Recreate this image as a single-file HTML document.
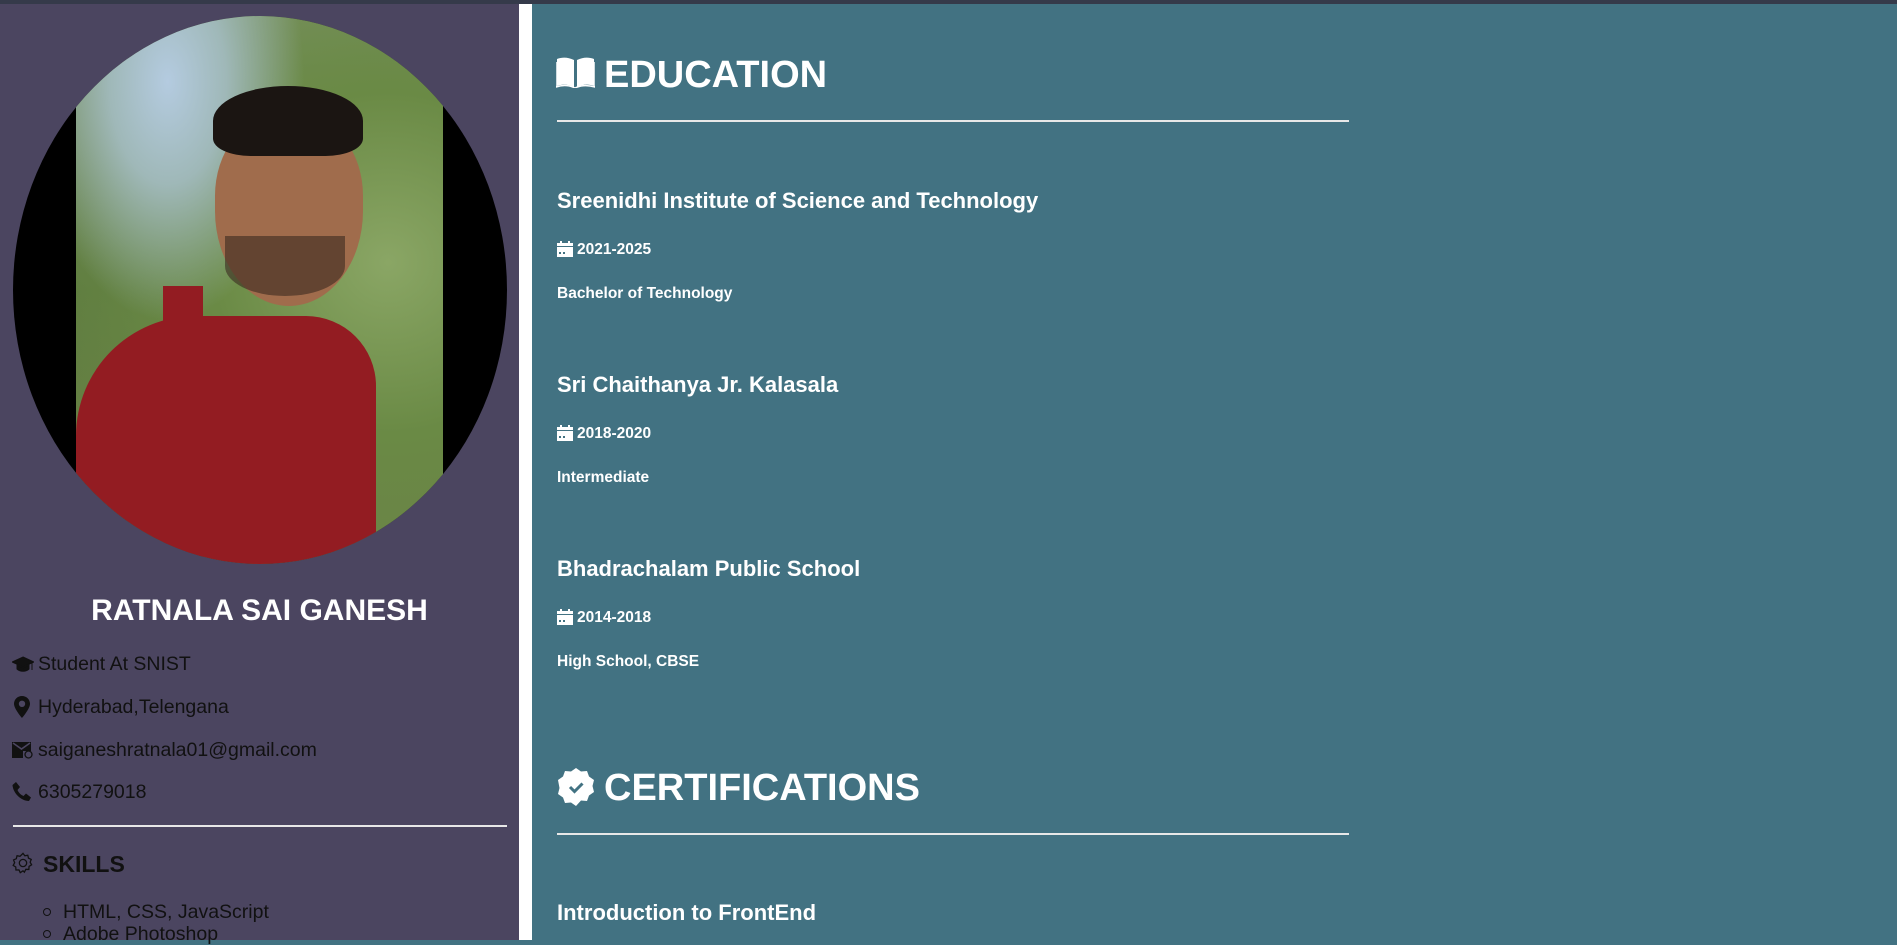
<!DOCTYPE html>
<html><head><meta charset="utf-8"><style>
*{margin:0;padding:0;box-sizing:border-box}
body{width:1897px;height:937px;overflow:hidden;background:#427282;font-family:"Liberation Sans",Arial,sans-serif;position:relative}
.a{position:absolute;white-space:nowrap}
.side{position:absolute;left:0;top:0;width:519px;height:940px;background:#4b4560}
.strip{position:absolute;left:519px;top:0;width:13px;height:940px;background:#fff}
.topbar{position:absolute;left:0;top:0;width:1897px;height:4px;background:#353a4a}
.w{color:#fff;font-weight:bold}
.c{font-size:19.5px;color:#111;line-height:20px}
.hr{position:absolute;height:2px;background:#e8e8e8}
</style></head><body>
<div class="side"></div>
<div class="strip"></div>
<div class="topbar"></div>

<div class="a" style="left:13px;top:16px;width:494px;height:548px;border-radius:50%;overflow:hidden;background:#000">
  <div style="position:absolute;left:63px;top:0;width:367px;height:548px;background:radial-gradient(ellipse at 25% 12%,#b4cbe0 0,#9fb8b8 15%,transparent 35%),radial-gradient(ellipse at 85% 45%,#8aa665 0,#6a8a45 40%,transparent 75%),linear-gradient(180deg,#789060 0,#5f7d40 50%,#6d8448 100%)"></div>
  <div style="position:absolute;left:63px;top:300px;width:300px;height:260px;background:#931c22;border-radius:120px 70px 0 0"></div>
  <div style="position:absolute;left:150px;top:270px;width:40px;height:290px;background:#931c22"></div>
  <div style="position:absolute;left:202px;top:100px;width:148px;height:190px;background:#a06c4c;border-radius:42% 42% 50% 50%"></div>
  <div style="position:absolute;left:200px;top:70px;width:150px;height:70px;background:#1b1512;border-radius:50% 50% 25% 25%"></div>
  <div style="position:absolute;left:212px;top:220px;width:120px;height:60px;background:#3a2a20;border-radius:0 0 50% 50%;opacity:.6"></div>
</div>

<div class="a w" style="left:0;width:519px;text-align:center;top:596px;font-size:30px;line-height:30px;color:#fff">RATNALA SAI GANESH</div>

<svg class="a" style="left:12px;top:655px" width="22" height="20" viewBox="0 0 22 20"><path d="M11 2 L22 7 L11 12 L0 7Z M5 10 v4 c3 3 9 3 12 0 v-4 l-6 3z M20 8 v7" fill="#111" stroke="#111" stroke-width="1"/></svg>
<div class="a c" style="left:38px;top:654px">Student At SNIST</div>
<svg class="a" style="left:14px;top:696px" width="16" height="22" viewBox="0 0 16 22"><path d="M8 0C3.6 0 0 3.4 0 7.8 0 13 8 22 8 22s8-9 8-14.2C16 3.4 12.4 0 8 0zm0 11a3.2 3.2 0 1 1 0-6.4A3.2 3.2 0 0 1 8 11z" fill="#111"/></svg>
<div class="a c" style="left:38px;top:697px">Hyderabad,Telengana</div>
<svg class="a" style="left:12px;top:741px" width="22" height="18" viewBox="0 0 22 18"><path d="M0 1h19v9h-8v7H0z" fill="#111"/><path d="M1 2l8.5 6L18 2" stroke="#4b4560" stroke-width="1.6" fill="none"/><circle cx="16.5" cy="13.5" r="3.5" fill="none" stroke="#111" stroke-width="1.3"/></svg>
<div class="a c" style="left:38px;top:740px">saiganeshratnala01@gmail.com</div>
<svg class="a" style="left:12px;top:782px" width="20" height="20" viewBox="0 0 20 20"><path d="M4 0l4 5-2.5 3c1 2.5 3.5 5 6 6L14 11.5l5 4-2 3.5C9 19 1 11 0.5 3z" fill="#111"/></svg>
<div class="a c" style="left:38px;top:782px">6305279018</div>

<div class="hr" style="left:13px;top:825px;width:494px"></div>

<svg class="a" style="left:12px;top:852px" width="22" height="22" viewBox="0 0 24 24"><path d="M12 1.5l2 2.6 3.2-.6.8 3.2 3 1.4-1.2 3 1.6 2.9-2.8 1.7-.2 3.3-3.3-.1L13.5 22l-1.5-1.5L9 22.5l-1.4-3-3.3.1-.2-3.3-2.8-1.7 1.6-2.9-1.2-3 3-1.4.8-3.2 3.2.6z" fill="none" stroke="#111" stroke-width="1.4"/><circle cx="12" cy="12" r="4" fill="none" stroke="#111" stroke-width="1.4"/></svg>
<div class="a" style="left:43px;top:852px;font-size:23px;font-weight:bold;color:#111;line-height:24px">SKILLS</div>
<div class="a" style="left:43px;top:908px;width:8px;height:8px;border:1.3px solid #111;border-radius:50%"></div>
<div class="a c" style="left:63px;top:902px">HTML, CSS, JavaScript</div>
<div class="a" style="left:43px;top:930px;width:8px;height:8px;border:1.3px solid #111;border-radius:50%"></div>
<div class="a c" style="left:63px;top:924px">Adobe Photoshop</div>

<!-- right -->
<svg class="a" style="left:556px;top:56px" width="39" height="32" viewBox="0 0 39 32"><path d="M1 3c5-2 11-2 17 1v27c-6-3-12-3-17-1z M21 4c6-3 12-3 17-1v27c-5-2-11-2-17 1z" fill="#fff"/><path d="M0 6v25c6-2 13-2 19 1 6-3 13-3 20-1V6" fill="none" stroke="#fff" stroke-width="1.5"/></svg>
<div class="a w" style="left:604px;top:55px;font-size:38px;line-height:40px">EDUCATION</div>
<div class="hr" style="left:557px;top:120px;width:792px"></div>

<div class="a w" style="left:557px;top:189px;font-size:22px;line-height:24px">Sreenidhi Institute of Science and Technology</div>
<svg class="a" style="left:557px;top:241px" width="16" height="16" viewBox="0 0 16 16"><path d="M3 0h2v2h6V0h2v2h3v3H0V2h3z M0 6h16v10H0z" fill="#fff"/><rect x="2" y="11" width="2" height="2" fill="#427282"/><rect x="6" y="11" width="2" height="2" fill="#427282"/></svg>
<div class="a w" style="left:577px;top:241px;font-size:15.5px;line-height:18px">2021-2025</div>
<div class="a w" style="left:557px;top:285px;font-size:15.5px;line-height:18px">Bachelor of Technology</div>

<div class="a w" style="left:557px;top:373px;font-size:22px;line-height:24px">Sri Chaithanya Jr. Kalasala</div>
<svg class="a" style="left:557px;top:425px" width="16" height="16" viewBox="0 0 16 16"><path d="M3 0h2v2h6V0h2v2h3v3H0V2h3z M0 6h16v10H0z" fill="#fff"/><rect x="2" y="11" width="2" height="2" fill="#427282"/><rect x="6" y="11" width="2" height="2" fill="#427282"/></svg>
<div class="a w" style="left:577px;top:425px;font-size:15.5px;line-height:18px">2018-2020</div>
<div class="a w" style="left:557px;top:469px;font-size:15.5px;line-height:18px">Intermediate</div>

<div class="a w" style="left:557px;top:557px;font-size:22px;line-height:24px">Bhadrachalam Public School</div>
<svg class="a" style="left:557px;top:609px" width="16" height="16" viewBox="0 0 16 16"><path d="M3 0h2v2h6V0h2v2h3v3H0V2h3z M0 6h16v10H0z" fill="#fff"/><rect x="2" y="11" width="2" height="2" fill="#427282"/><rect x="6" y="11" width="2" height="2" fill="#427282"/></svg>
<div class="a w" style="left:577px;top:609px;font-size:15.5px;line-height:18px">2014-2018</div>
<div class="a w" style="left:557px;top:653px;font-size:15.5px;line-height:18px">High School, CBSE</div>

<svg class="a" style="left:556px;top:767px" width="40" height="40" viewBox="0 0 40 40"><path d="M20 1l5 3.5 6-.5 2 5.5 5 3.5-1.5 6 1.5 6-5 3.5-2 5.5-6-.5L20 39l-5-3.5-6 .5-2-5.5-5-3.5 1.5-6L2 13l5-3.5 2-5.5 6 .5z" fill="#fff"/><path d="M14 20l4.5 4.5 8-8" stroke="#427282" stroke-width="3" fill="none"/></svg>
<div class="a w" style="left:604px;top:768px;font-size:38px;line-height:40px">CERTIFICATIONS</div>
<div class="hr" style="left:557px;top:833px;width:792px"></div>

<div class="a w" style="left:557px;top:901px;font-size:22px;line-height:24px">Introduction to FrontEnd</div>
</body></html>
